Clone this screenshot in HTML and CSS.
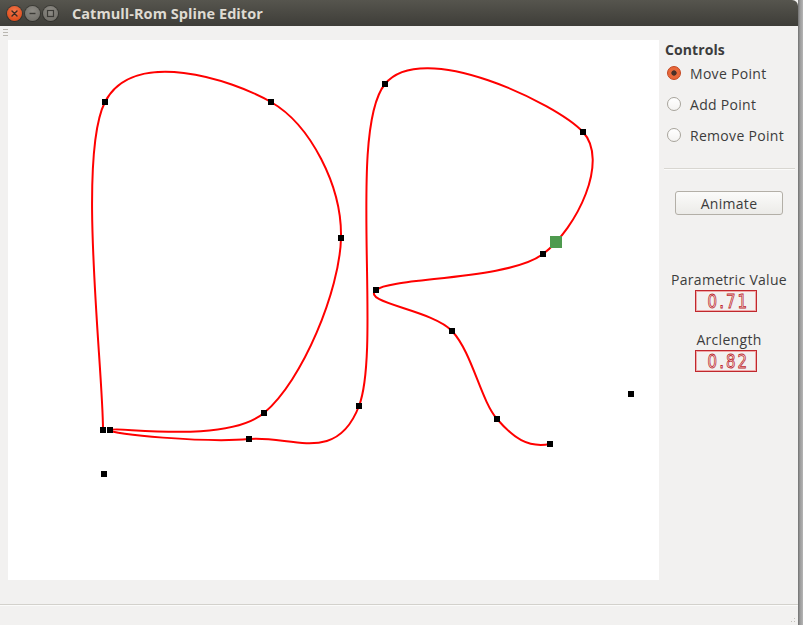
FILE: index.html
```html
<!DOCTYPE html>
<html>
<head>
<meta charset="utf-8">
<title>Catmull-Rom Spline Editor</title>
<link rel="stylesheet" href="styles.css">
</head>
<body>
<div class="screen">
  <div class="window">
    <div class="titlebar">
      <div class="wbtns">
        <span class="wbtn close"><svg width="15" height="15" viewBox="0 0 15 15"><path d="M5 5L10 10M10 5L5 10" stroke="#3a2a22" stroke-width="1.4" stroke-linecap="round"/></svg></span>
        <span class="wbtn gray"><svg width="15" height="15" viewBox="0 0 15 15"><path d="M4.5 7.5H10.5" stroke="#3c3b37" stroke-width="1.4"/></svg></span>
        <span class="wbtn gray"><svg width="15" height="15" viewBox="0 0 15 15"><rect x="4.5" y="4.5" width="6" height="6" fill="none" stroke="#3c3b37" stroke-width="1.2"/></svg></span>
      </div>
      <div class="title">Catmull-Rom Spline Editor</div>
    </div>
    <div class="main">
      <div class="grip"></div>
      <div class="canvas-wrap">
        <svg class="canvas" width="651" height="540" viewBox="8 40 651 540">
          <rect x="8" y="40" width="651" height="540" fill="#fff"/>
          <path d="M103,430 C103.17,368 77,156.67 105,102 C133,47.33 231.67,79.33 271,102 C310.33,124.67 342.17,186.17 341,238 C339.83,289.83 302.5,381 264,413 C225.5,445 112.5,425.67 110,430 C107.5,434.33 207.5,443 249,439 C290.5,435 336.33,465.17 359,406 C381.67,346.83 347.67,129.67 385,84 C422.33,38.33 556.67,103.67 583,132 C609.33,160.33 577.5,227.67 543,254 C508.5,280.33 391.17,277.17 376,290 C360.83,302.83 431.83,309.5 452,331 C472.17,352.5 480.67,400.17 497,419 C513.33,437.83 527.67,448.17 550,444" fill="none" stroke="#f00" stroke-width="2"/>
          <g fill="#000">
            <rect x="101" y="471" width="6" height="6"/>
            <rect x="100" y="427" width="6" height="6"/>
            <rect x="102" y="99" width="6" height="6"/>
            <rect x="268" y="99" width="6" height="6"/>
            <rect x="338" y="235" width="6" height="6"/>
            <rect x="261" y="410" width="6" height="6"/>
            <rect x="107" y="427" width="6" height="6"/>
            <rect x="246" y="436" width="6" height="6"/>
            <rect x="356" y="403" width="6" height="6"/>
            <rect x="382" y="81" width="6" height="6"/>
            <rect x="580" y="129" width="6" height="6"/>
            <rect x="540" y="251" width="6" height="6"/>
            <rect x="373" y="287" width="6" height="6"/>
            <rect x="449" y="328" width="6" height="6"/>
            <rect x="494" y="416" width="6" height="6"/>
            <rect x="547" y="441" width="6" height="6"/>
            <rect x="628" y="391" width="6" height="6"/>
          </g>
          <rect x="550" y="236" width="12" height="12" fill="#4e9a4e"/>
        </svg>
      </div>
      <div class="panel">
        <div class="group-title">Controls</div>
        <div class="radios">
          <label class="radio-row"><span class="radio on"></span><span>Move Point</span></label>
          <label class="radio-row"><span class="radio"></span><span>Add Point</span></label>
          <label class="radio-row"><span class="radio"></span><span>Remove Point</span></label>
        </div>
        <div class="sep"></div>
        <div class="btn">Animate</div>
        <div class="lbl lbl-first">Parametric Value</div>
        <div class="lcd"><span class="digits">0.71</span></div>
        <div class="lbl lbl-second">Arclength</div>
        <div class="lcd"><span class="digits">0.82</span></div>
      </div>
    </div>
    <div class="statusbar"><div class="sizegrip"></div></div>
  </div>
  <div class="shadow"></div>
</div>
</body>
</html>
```

FILE: styles.css
```css
* { box-sizing: border-box; }
html, body { margin: 0; padding: 0; }
body {
  width: 803px;
  height: 625px;
  overflow: hidden;
  background: #c9c9c9;
  font-family: "Open Sans", "DejaVu Sans", sans-serif;
  color: #3c3c3c;
}
.screen { display: flex; height: 625px; }
.window {
  width: 798px;
  height: 625px;
  display: flex;
  flex-direction: column;
  background: #f2f1f0;
  position: relative;
}
.shadow {
  width: 5px;
  background: linear-gradient(to right, #707070, #9a9a9a 40%, #b5b5b5);
}
.titlebar {
  height: 26px;
  flex: none;
  display: flex;
  align-items: center;
  padding-left: 7px;
  background: linear-gradient(#56554e, #3e3d38);
  border-top-right-radius: 6px;
}
.wbtns { display: flex; gap: 3px; }
.wbtn {
  width: 15px;
  height: 15px;
  border-radius: 50%;
  display: block;
  margin-top: 1px;
}
.wbtn svg { display: block; }
.wbtn.close {
  background: radial-gradient(circle at 50% 35%, #f2794e, #e0501f 70%, #c2401a);
  box-shadow: 0 0 0 1px rgba(0,0,0,0.25);
}
.wbtn.gray {
  background: radial-gradient(circle at 50% 35%, #8e8c86, #76746e 70%, #65635e);
  box-shadow: 0 0 0 1px rgba(0,0,0,0.25);
}
.title {
  margin-left: 14px;
  color: #dfdbd2;
  font-weight: bold;
  font-size: 14.5px;
  letter-spacing: 0.05px;
}
.main {
  display: flex;
  flex: 1;
  position: relative;
}
.grip {
  position: absolute;
  left: 3px;
  top: 3px;
  width: 5px;
  height: 9px;
  background: repeating-linear-gradient(#b9b6b0 0 1px, transparent 1px 3px);
}
.canvas-wrap { padding: 14px 0 0 8px; }
.canvas { display: block; }
.panel {
  width: 138px;
  margin-left: 1px;
  display: flex;
  flex-direction: column;
  padding-top: 15px;
}
.group-title {
  font-weight: bold;
  font-size: 14px;
  line-height: 18px;
  margin-left: 5px;
  color: #3c3c3c;
  letter-spacing: 0.1px;
}
.radios {
  display: flex;
  flex-direction: column;
  gap: 11px;
  margin-top: 4px;
}
.radio-row {
  display: flex;
  align-items: center;
  height: 20px;
  font-size: 14px;
  letter-spacing: 0.3px;
  padding-left: 7px;
  gap: 9px;
}
.radio {
  width: 14px;
  height: 14px;
  flex: none;
  border-radius: 50%;
  border: 1px solid #a8a49c;
  background: linear-gradient(#ffffff, #f4f3f1);
}
.radio.on {
  border-color: #c4431c;
  background: radial-gradient(circle, #4a3129 0 2.3px, #e8683a 3px 100%);
}
.sep {
  height: 1px;
  margin: 23px 3px 0 4px;
  background: #d8d6d1;
  box-shadow: 0 1px 0 #fbfbfa;
}
.btn {
  margin: 22px 0 0 15px;
  width: 108px;
  height: 24px;
  border: 1px solid #b3afa7;
  border-radius: 3px;
  background: linear-gradient(#fbfbfa, #ecebe8);
  display: flex;
  align-items: center;
  justify-content: center;
  font-size: 14px;
  letter-spacing: 0.3px;
  color: #3c3c3c;
}
.lbl {
  text-align: center;
  font-size: 14px;
  letter-spacing: 0.3px;
  line-height: 18px;
}
.lbl-first { margin-top: 56px; }
.lbl-second { margin-top: 19px; }
.lcd {
  margin: 1px 0 0 35px;
  width: 62px;
  height: 22px;
  border: 1px solid #c0282d;
  box-shadow: inset 0 0 0 1px #f0a8a8;
  display: flex;
  align-items: center;
  justify-content: flex-end;
  padding-right: 7px;
  overflow: hidden;
}
.digits {
  white-space: pre;
  font-family: "DejaVu Sans", sans-serif;
  font-size: 15px;
  line-height: 16px;
  letter-spacing: 2px;
  color: #f4eeee;
  -webkit-text-stroke: 0.7px #c0282d;
  transform: scaleY(1.3);
}
.statusbar {
  height: 21px;
  flex: none;
  border-top: 1px solid #d3d1cc;
  box-shadow: inset 0 1px 0 #fbfbfa;
  position: relative;
}
.sizegrip {
  position: absolute;
  right: 1px;
  bottom: 1px;
  width: 10px;
  height: 10px;
  background: radial-gradient(circle, #c3c0ba 0 0.8px, transparent 1px) 0 0 / 3px 3px;
  clip-path: polygon(100% 0, 100% 100%, 0 100%);
}
```
